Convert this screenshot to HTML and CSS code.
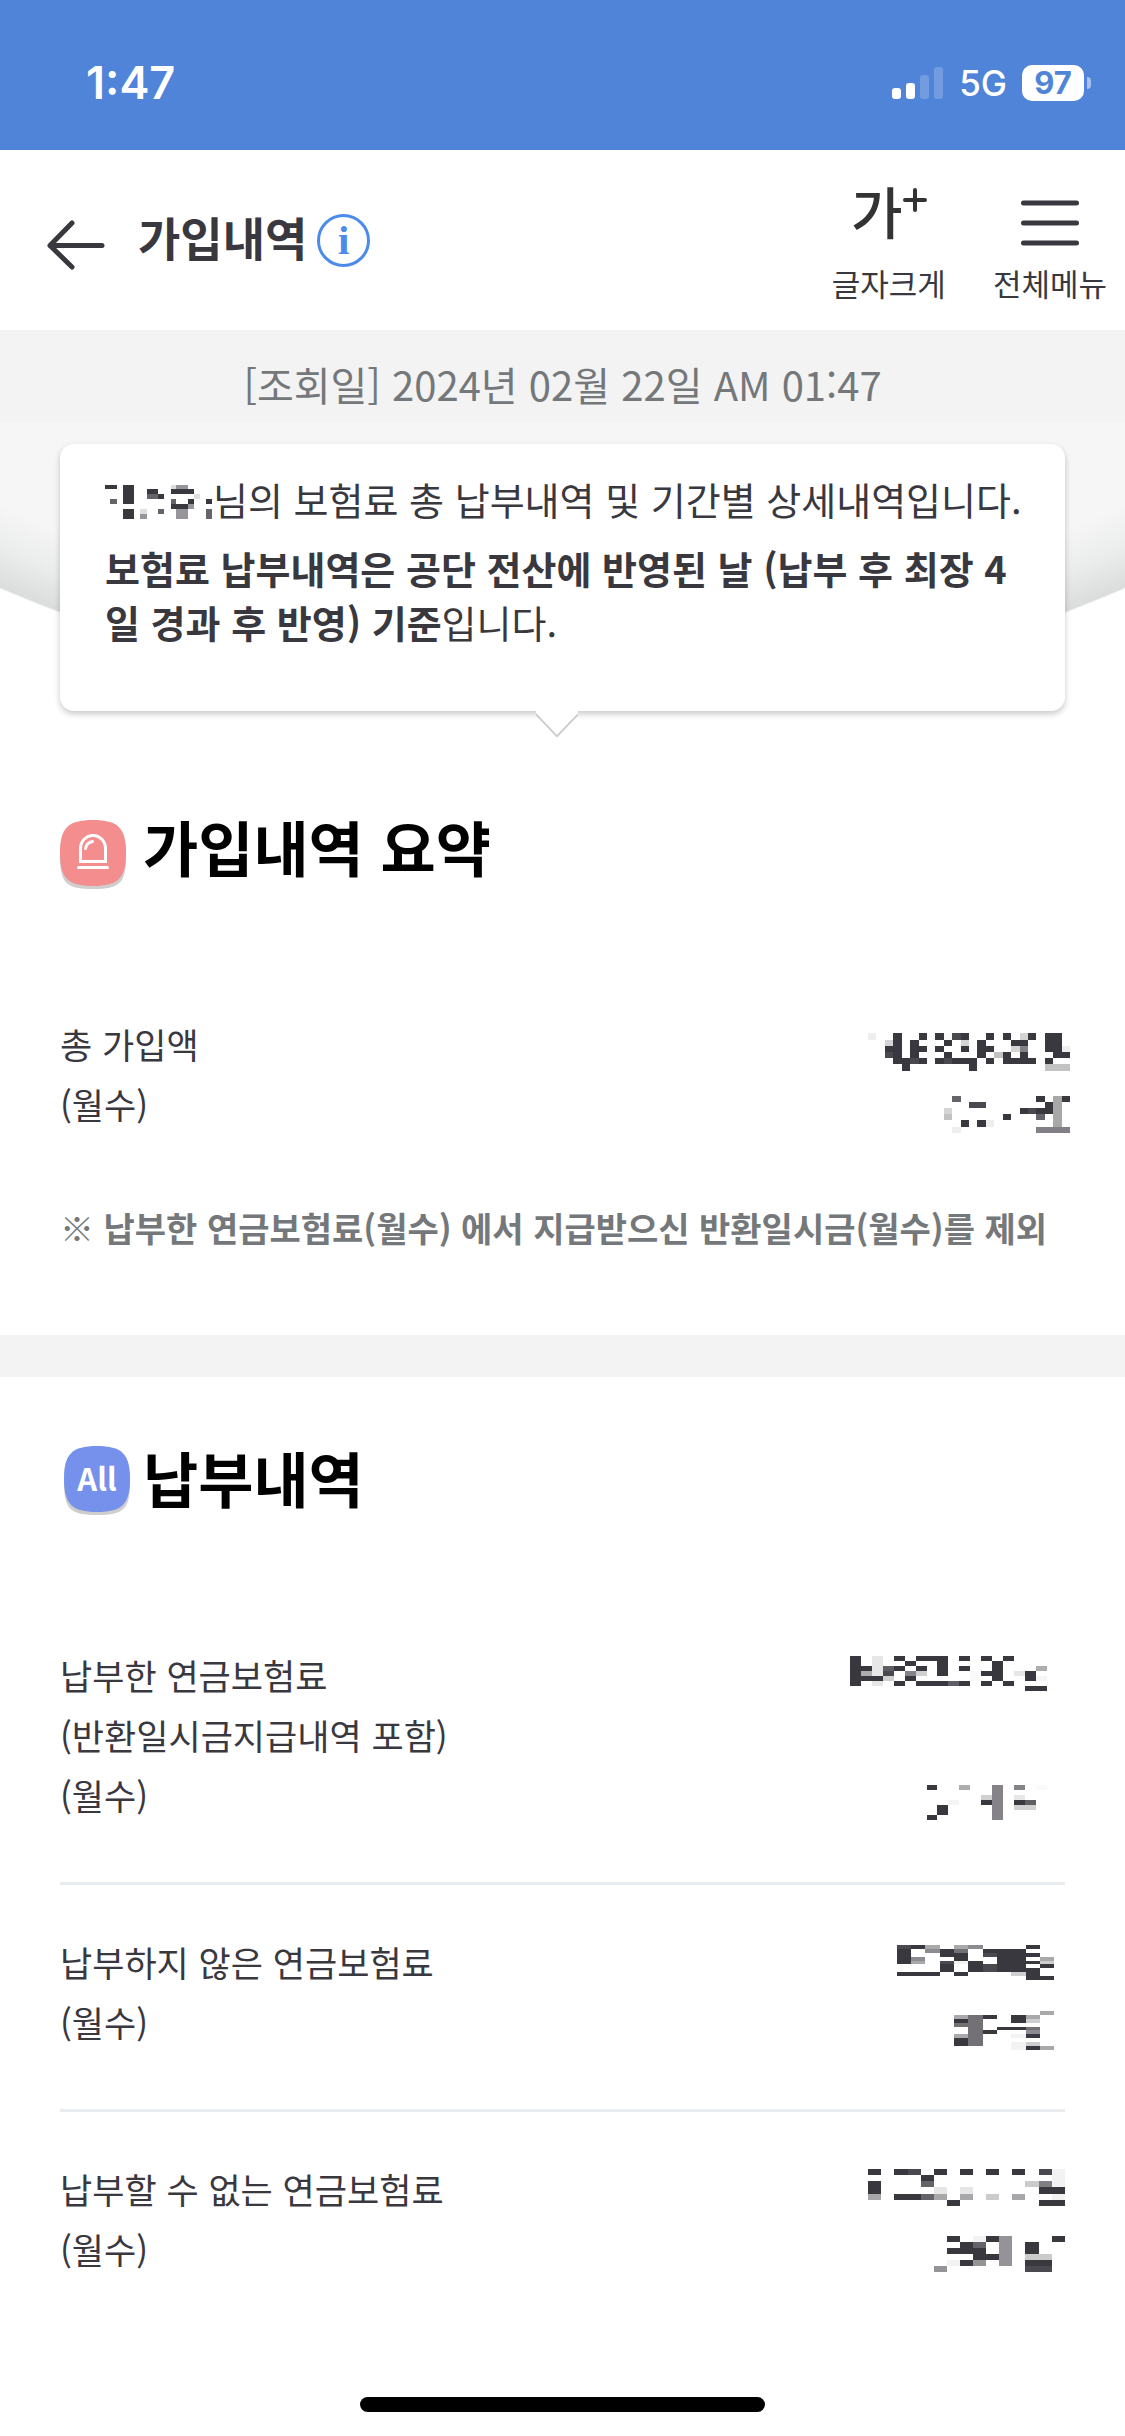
FILE: index.html
```html
<!DOCTYPE html>
<html lang="ko">
<head>
<meta charset="utf-8">
<meta name="viewport" content="width=device-width, initial-scale=1">
<title>가입내역</title>
<link rel="stylesheet" href="styles.css">
</head>
<body>
<div class="status-bar">
  <span class="status-time">1:47</span>
  <div class="status-icons">
    <svg class="signal" viewBox="0 0 52 32" aria-hidden="true">
      <rect x="0" y="21" width="9" height="11" rx="3"/>
      <rect x="14" y="16" width="9" height="16" rx="3"/>
      <rect x="28" y="8" width="9" height="24" rx="3" opacity=".2"/>
      <rect x="42" y="0" width="9" height="32" rx="3" opacity=".2"/>
    </svg>
    <span class="network">5G</span>
    <span class="battery">97</span>
  </div>
</div>

<header class="app-bar">
  <button class="back" type="button" aria-label="뒤로">
    <svg viewBox="0 0 60 52" width="60" height="52"><path d="M26 4 4 26.500 26 48M4 26.500H56" fill="none" stroke="#3a383f" stroke-width="5" stroke-linecap="round" stroke-linejoin="round"/></svg>
  </button>
  <div class="title-group">
    <h1 class="page-title">가입내역</h1>
    <button class="info" type="button" aria-label="안내">i</button>
  </div>
  <nav class="tools">
    <button class="tool" type="button">
      <span class="tool-icon"><span class="glyph">가</span><svg class="plus" viewBox="0 0 24 24"><path d="M12 2v20M2 12h20" stroke="#333" stroke-width="4" stroke-linecap="round"/></svg></span>
      <span class="tool-label">글자크게</span>
    </button>
    <button class="tool" type="button">
      <span class="tool-icon"><svg viewBox="0 0 58 46" width="58" height="46"><path d="M2.500 3h53M2.500 23h53M2.500 43h53" stroke="#3a383f" stroke-width="5" stroke-linecap="round"/></svg></span>
      <span class="tool-label">전체메뉴</span>
    </button>
  </nav>
</header>

<main>
  <p class="lookup-date">[조회일] 2024년 02월 22일 AM 01:47</p>

  <div class="hero">
    <div class="notice">
      <p class="notice-lead"><svg class="masked-name" viewBox="296 190 316 110" preserveAspectRatio="none" shape-rendering="crispEdges" role="img" aria-label="가려진 이름">
        <path fill="#3a383f" d="M296 198h36v12h-36zM349 198h33v57h-33zM349 270h33v30h-33zM419 210h33v15h-33zM452 225h17v15h-17zM488 210h67v15h-67zM538 240h17v15h-17zM488 255h50v15h-50zM591 240h17v15h-17z"/>
        <path fill="#66646a" d="M312 240h20v15h-20zM419 225h33v15h-33zM452 270h17v15h-17zM488 240h17v15h-17zM591 270h17v30h-17z"/>
        <path fill="#97959b" d="M399 285h20v15h-20zM505 270h33v30h-33zM538 255h17v15h-17zM505 198h33v12h-33z"/>
        <path fill="#dedede" d="M399 270h20v15h-20zM488 198h17v12h-17zM555 225h20v15h-20z"/>
      </svg>님의 보험료 총 납부내역 및 기간별 상세내역입니다.</p>
      <p><strong>보험료 납부내역은 공단 전산에 반영된 날 (납부 후 최장 4일 경과 후 반영) 기준</strong>입니다.</p>
      <svg class="notice-tail" viewBox="0 0 42 28" aria-hidden="true"><path d="M0 3 21 25 42 3" fill="#fff" stroke="#c8c8c8" stroke-width="2"/><path d="M0 0H42V2L21 24 0 2z" fill="#fff"/></svg>
    </div>
  </div>

  <section class="section summary">
    <h2 class="section-title">
      <svg class="badge" viewBox="0 -5 74 72" aria-hidden="true">
        <path d="M33 3C60 3 66 9 66 36S60 69 33 69 0 63 0 36 6 3 33 3z" fill="#d0cdcd"/>
        <path d="M33 0C58 0 66 8 66 33S58 66 33 66 0 58 0 33 8 0 33 0z" fill="#f48d8e"/>
        <g fill="none" stroke="#fff" stroke-width="3" stroke-linecap="round"><path d="M20.500 41.500V28.500a12.500 13 0 0 1 25 0V41.500z"/><path d="M25.500 28.500q1-6 7-7M18.500 47.500h29"/></g>
      </svg>
      가입내역 요약
    </h2>
    <dl class="entries">
      <div class="entry">
        <dt>총 가입액<br>(월수)</dt>
        <dd><svg class="masked" viewBox="-45 12 720 360" height="120" shape-rendering="crispEdges" role="img" aria-label="가려진 금액과 월수">
          <path fill="#3a383f" d="M159 63h27v93h-27zM135 102h24v18h-24zM186 138h24v39h-24zM210 84h27v54h-27zM237 63h24v21h-24zM237 102h24v18h-24zM237 138h24v18h-24zM285 63h27v21h-27zM285 102h27v18h-27zM285 138h27v18h-27zM312 84h24v18h-24zM312 120h24v18h-24zM363 63h24v21h-24zM363 102h24v18h-24zM336 138h75v18h-75zM387 156h24v21h-24zM411 84h27v54h-27zM438 63h24v21h-24zM438 102h24v18h-24zM438 138h24v18h-24zM489 63h24v21h-24zM513 84h51v18h-51zM489 120h24v18h-24zM540 120h24v18h-24zM489 138h99v18h-99zM564 63h24v21h-24zM615 63h51v57h-51zM639 120h51v18h-51zM615 138h24v18h-24zM588 252h27v18h-27zM666 252h24v18h-24zM615 270h24v18h-24zM540 288h24v18h-24zM588 288h51v18h-51zM489 306h24v18h-24zM363 324h24v21h-24zM411 324h27v21h-27z"/>
          <path fill="#4b4950" d="M135 120h24v18h-24zM210 138h27v18h-27zM312 138h24v18h-24zM336 63h27v21h-27zM387 270h51v18h-51zM564 288h24v18h-24z"/>
          <path fill="#66646a" d="M336 252h27v18h-27zM588 306h27v18h-27z"/>
          <path fill="#828086" d="M540 102h24v18h-24zM588 345h102v18h-102z"/>
          <path fill="#a8a8a9" d="M639 252h27v93h-27z"/>
          <path fill="#c2c2c3" d="M462 120h27v18h-27zM615 156h75v21h-75zM312 306h24v18h-24z"/>
          <path fill="#d4d4d5" d="M135 84h24v18h-24zM363 84h24v18h-24zM540 63h24v21h-24zM513 102h27v18h-27zM312 288h24v18h-24z"/>
          <path fill="#eee" d="M84 63h24v21h-24zM666 102h24v18h-24zM336 345h27v18h-27zM438 324h24v21h-24z"/>
          <path fill="#f9f9f9" d="M312 63h24v21h-24zM261 120h24v18h-24z"/>
        </svg></dd>
      </div>
    </dl>
    <p class="footnote">※ 납부한 연금보험료(월수) 에서 지급받으신 반환일시금(월수)를 제외</p>
  </section>

  <section class="section payments">
    <h2 class="section-title">
      <svg class="badge" viewBox="-4 0 74 72" aria-hidden="true">
        <path d="M33 3C60 3 66 9 66 36S60 69 33 69 0 63 0 36 6 3 33 3z" fill="#d0cdcd"/>
        <path d="M33 0C58 0 66 8 66 33S58 66 33 66 0 58 0 33 8 0 33 0z" fill="#7691ec"/>
        <text class="badge-text" x="33" y="45" text-anchor="middle">All</text>
      </svg>
      납부내역
    </h2>
    <dl class="entries">
      <div class="entry">
        <dt>납부한 연금보험료<br>(반환일시금지급내역 포함)<br>(월수)</dt>
        <dd><svg class="masked" viewBox="15 30 720 540" height="180" shape-rendering="crispEdges" role="img" aria-label="가려진 금액과 월수">
          <path fill="#3a383f" d="M90 57h33v90h-33zM123 87h33v15h-33zM123 117h66v15h-66zM222 57h33v15h-33zM255 72h33v15h-33zM222 87h33v15h-33zM255 117h33v15h-33zM222 132h33v15h-33zM288 57h96v15h-96zM351 72h33v45h-33zM288 87h33v15h-33zM288 132h96v15h-96zM417 57h33v15h-33zM417 87h33v15h-33zM417 132h33v15h-33zM483 57h33v15h-33zM516 72h33v60h-33zM483 102h33v15h-33zM483 132h33v15h-33zM549 57h33v15h-33zM549 132h33v15h-33zM615 102h33v30h-33zM615 147h66v15h-66zM321 444h30v15h-30zM351 504h33v30h-33zM321 534h30v15h-30zM483 489h33v15h-33zM582 489h33v15h-33z"/>
          <path fill="#605e64" d="M189 87h33v15h-33zM384 132h33v15h-33zM615 489h33v15h-33z"/>
          <path fill="#4b4950" d="M189 102h33v15h-33z"/>
          <path fill="#858388" d="M516 444h33v105h-33zM582 444h33v15h-33zM255 102h33v15h-33z"/>
          <path fill="#adadae" d="M123 102h33v15h-33zM648 87h33v15h-33zM417 444h33v15h-33z"/>
          <path fill="#d0d0d1" d="M189 117h33v15h-33zM288 102h33v15h-33zM483 474h33v15h-33zM582 504h66v15h-66z"/>
          <path fill="#e7e7e7" d="M156 57h33v60h-33zM156 132h33v15h-33zM582 102h33v15h-33zM582 474h33v15h-33z"/>
          <path fill="#f5f5f5" d="M384 489h33v15h-33zM648 117h33v15h-33z"/>
          <path fill="#fafafa" d="M450 102h33v30h-33zM648 444h33v15h-33z"/>
        </svg></dd>
      </div>
      <div class="entry">
        <dt>납부하지 않은 연금보험료<br>(월수)</dt>
        <dd><svg class="masked" viewBox="-45 48 720 360" height="120" shape-rendering="crispEdges" role="img" aria-label="가려진 금액과 월수">
          <path fill="#3a383f" d="M213 81h42v12h-42zM171 93h42v45h-42zM171 162h129v12h-129zM300 93h42v24h-42zM342 105h42v24h-42zM300 138h42v24h-42zM342 162h42v12h-42zM384 129h45v33h-45zM429 93h129v12h-129zM471 105h87v57h-87zM558 81h42v12h-42zM558 105h42v12h-42zM558 129h42v9h-42zM558 150h42v36h-42zM600 138h42v12h-42zM600 174h42v12h-42zM342 303h42v12h-42zM342 360h42v24h-42zM429 291h42v12h-42zM429 336h42v12h-42zM471 327h87v9h-87zM513 291h45v24h-45zM558 348h42v12h-42zM558 384h42v12h-42z"/>
          <path fill="#4b4950" d="M171 81h42v12h-42zM429 105h42v12h-42zM300 129h42v9h-42zM429 138h42v24h-42z"/>
          <path fill="#737176" d="M342 93h42v12h-42zM384 291h45v93h-45zM342 315h42v12h-42zM558 327h42v9h-42z"/>
          <path fill="#8d8b90" d="M384 81h45v12h-45zM255 93h45v12h-45zM213 117h42v12h-42zM558 336h42v12h-42z"/>
          <path fill="#a9a8ab" d="M255 81h45v12h-45zM342 81h42v12h-42zM213 129h42v9h-42zM600 117h42v12h-42zM600 279h42v12h-42zM342 291h42v12h-42zM558 291h42v12h-42zM342 348h42v12h-42zM600 384h42v12h-42z"/>
          <path fill="#cecece" d="M513 162h45v12h-45zM600 129h42v9h-42zM558 303h42v12h-42zM558 372h42v12h-42z"/>
          <path fill="#f3f3f3" d="M342 129h42v9h-42zM513 348h45v12h-45zM513 372h45v24h-45z"/>
        </svg></dd>
      </div>
      <div class="entry">
        <dt>납부할 수 없는 연금보험료<br>(월수)</dt>
        <dd><svg class="masked" viewBox="-45 723 720 360" height="120" shape-rendering="crispEdges" role="img" aria-label="가려진 금액과 월수">
          <path fill="#3a383f" d="M84 747h39v18h-39zM84 783h39v39h-39zM162 747h42v18h-42zM162 822h81v18h-81zM243 765h39v18h-39zM282 747h39v18h-39zM360 747h39v18h-39zM438 747h39v18h-39zM516 747h39v18h-39zM321 840h39v18h-39zM597 801h78v21h-78zM597 840h78v18h-78zM321 948h39v18h-39zM360 966h39v18h-39zM321 984h117v18h-117zM399 1002h78v18h-78zM438 948h39v18h-39zM360 1020h39v18h-39zM555 966h42v36h-42zM636 948h39v18h-39zM555 1020h81v18h-81z"/>
          <path fill="#4b4950" d="M204 747h39v18h-39zM597 747h39v18h-39zM555 1038h81v18h-81z"/>
          <path fill="#656369" d="M243 783h39v18h-39zM243 822h39v18h-39zM399 966h39v18h-39z"/>
          <path fill="#807e83" d="M597 783h39v18h-39z"/>
          <path fill="#959398" d="M477 948h39v90h-39zM399 1020h39v18h-39zM282 1038h39v18h-39z"/>
          <path fill="#a7a6a8" d="M84 822h39v18h-39zM282 822h39v18h-39zM360 822h39v18h-39zM516 822h39v18h-39z"/>
          <path fill="#cbcbcb" d="M438 822h39v18h-39zM555 783h42v18h-42zM555 1002h81v18h-81z"/>
          <path fill="#e6e6e6" d="M282 801h39v21h-39zM360 801h39v21h-39z"/>
          <path fill="#f2f2f2" d="M636 747h39v54h-39zM636 822h39v18h-39zM399 948h39v18h-39zM321 1020h39v18h-39z"/>
        </svg></dd>
      </div>
    </dl>
  </section>
</main>

<footer class="home-area"><span class="home-indicator"></span></footer>
</body>
</html>
```
FILE: styles.css
```css
* {
  box-sizing: border-box;
}

body {
  margin: 0;
  min-height: 100vh;
  display: flex;
  flex-direction: column;
  background: #fff;
  color: #3a383f;
  font-family: "Noto Sans CJK KR", "Noto Sans", sans-serif;
  font-size: 35px;
  line-height: 60px;
}

h1, h2, p, dl, dd {
  margin: 0;
}

button {
  border: 0;
  padding: 0;
  background: none;
  color: inherit;
  font-family: inherit;
  cursor: pointer;
}

svg {
  display: block;
  flex: none;
}

/* Device status bar */
.status-bar {
  display: flex;
  align-items: center;
  justify-content: space-between;
  height: 150px;
  padding: 15px 34px 0 86px;
  background: #4f84d8;
  color: #fff;
  font-family: Inter, sans-serif;
}

.status-time {
  font-size: 45px;
  font-weight: 600;
}

.status-icons {
  display: flex;
  align-items: center;
  gap: 15px;
}

.signal {
  width: 52px;
  height: 32px;
  fill: #fff;
}

.network {
  font-size: 35px;
  font-weight: 500;
}

.battery {
  display: flex;
  position: relative;
  align-items: center;
  justify-content: center;
  width: 62px;
  height: 36px;
  margin-right: 7px;
  border-radius: 10px;
  background: #fff;
  color: #4f84d8;
  font-size: 31px;
  font-weight: 700;
}

.battery::after {
  content: "";
  position: absolute;
  right: -7px;
  top: 12px;
  width: 4px;
  height: 12px;
  border-radius: 0 4px 4px 0;
  background: #a7c1eb;
}

/* App bar */
.app-bar {
  display: flex;
  align-items: center;
  height: 180px;
  padding: 0 18px 0 46px;
  background: #fff;
}

.back {
  margin-top: 10px;
}

.title-group {
  display: flex;
  flex: 1;
  align-items: center;
  gap: 10px;
  margin-left: 32px;
}

.page-title {
  padding-bottom: 8px;
  font-size: 46px;
  font-weight: 700;
}

.info {
  width: 53px;
  height: 53px;
  border: 3px solid #4c8bea;
  border-radius: 50%;
  color: #4c8bea;
  font-family: "Liberation Serif", serif;
  font-size: 41px;
  font-weight: 700;
  line-height: 44px;
}

.tools {
  display: flex;
  gap: 47px;
  padding-top: 14px;
}

.tool {
  display: flex;
  flex-direction: column;
  align-items: center;
  gap: 2px;
}

.tool-icon {
  display: flex;
  align-items: center;
  justify-content: center;
  height: 70px;
}

.glyph {
  align-self: flex-start;
  color: #333;
  font-size: 56px;
  font-weight: 500;
  line-height: 44px;
}

.plus {
  width: 24px;
  height: 24px;
  align-self: flex-start;
}

.tool-label {
  font-size: 31px;
  line-height: 46px;
}

/* Lookup date and notice */
.lookup-date {
  padding: 24px 20px 8px;
  background: #f3f3f3;
  color: #74787b;
  font-size: 40px;
  text-align: center;
}

.hero {
  padding: 22px 60px 0;
  background: radial-gradient(circle at 50% -1140px, #f6f6f6 1345px, #ebecec 1385px, #dbdcdc 1421px, #fff 1423px);
}

.notice {
  position: relative;
  padding: 28px 36px 62px 45px;
  border-radius: 14px;
  background: #fff;
  box-shadow: 0 3px 6px rgba(0, 0, 0, .22);
  font-size: 38px;
  line-height: 54px;
}

.notice-lead {
  margin-bottom: 15px;
}

.masked-name {
  display: inline-block;
  width: 108px;
  height: 37px;
  vertical-align: -4px;
}

.notice-tail {
  position: absolute;
  left: 50%;
  top: 100%;
  width: 42px;
  height: 28px;
  margin-left: -27px;
}

/* Sections */
.section {
  padding-right: 60px;
  padding-left: 60px;
}

.summary {
  padding-top: 94px;
  padding-bottom: 77px;
}

.payments {
  padding-top: 59px;
  border-top: 42px solid #f3f3f3;
}

.section-title {
  display: flex;
  align-items: center;
  gap: 9px;
  color: #000;
  font-size: 60px;
  font-weight: 700;
  line-height: 72px;
}

.badge {
  width: 74px;
  height: 72px;
  margin-top: 10px;
  overflow: visible;
}

.badge-text {
  fill: #fff;
  font-size: 31px;
  font-weight: 700;
}

.entries {
  padding-top: 80px;
}

.entry {
  display: flex;
  justify-content: space-between;
  padding: 47px 0 55px;
}

.entry + .entry {
  border-top: 3px solid #e8ecef;
}

.masked {
  width: 240px;
  margin-top: 2px;
  overflow: visible;
}

.footnote {
  margin-top: 7px;
  color: #74787b;
  font-size: 34px;
  font-weight: 700;
}

/* Home indicator */
.home-area {
  display: flex;
  justify-content: center;
  margin-top: auto;
  padding: 24px 0;
}

.home-indicator {
  width: 36%;
  height: 15px;
  border-radius: 8px;
  background: #000;
}
```
